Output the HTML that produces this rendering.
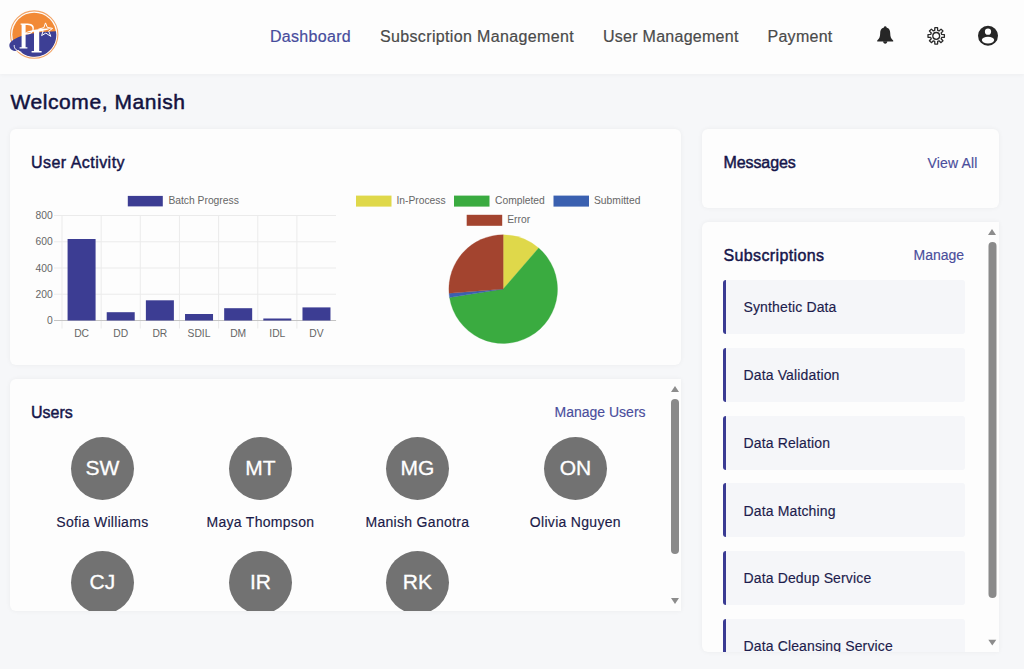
<!DOCTYPE html>
<html><head><meta charset="utf-8">
<style>
*{box-sizing:border-box;margin:0;padding:0}
html,body{width:1024px;height:669px;overflow:hidden;background:#f6f7f9;font-family:"Liberation Sans",sans-serif}
.t{position:absolute;white-space:nowrap;line-height:1}
#hdr{position:absolute;left:0;top:0;width:1024px;height:74px;background:#fdfdfd;box-shadow:0 1px 4px rgba(0,0,0,0.04)}
.nav{font-size:16px;color:#4a4a4a;top:28.8px;-webkit-text-stroke:.2px currentColor}
.card{position:absolute;background:#fdfdfd;border-radius:6px;box-shadow:0 0 5px rgba(0,0,0,0.05)}
.h{font-size:16px;color:#15154a;-webkit-text-stroke:.45px #15154a}
.lnk{font-size:14px;color:#4a4e9c;-webkit-text-stroke:.15px currentColor}
.sub{position:absolute;left:21px;width:242px;height:54px;background:#f5f6f9;border-left:3.7px solid #3a3b93;border-radius:3px}
.sub span{position:absolute;left:17.5px;top:20.3px;font-size:14px;color:#1d1d4d;white-space:nowrap;line-height:1;letter-spacing:.14px;-webkit-text-stroke:.15px currentColor}
.av{position:absolute;width:63px;height:63px;border-radius:50%;background:#727272}
.av span{position:absolute;left:0;right:0;top:20px;text-align:center;color:#fff;font-size:21px;line-height:1;-webkit-text-stroke:.3px #fff}
.nm{position:absolute;width:160px;text-align:center;font-size:14px;color:#1a1a48;line-height:1;white-space:nowrap;letter-spacing:.3px;-webkit-text-stroke:.15px currentColor}
.sb{position:absolute;background:#8a8a8a;border-radius:4px}
</style></head><body>
<div id="hdr">
  <svg style="position:absolute;left:0;top:0" width="70" height="70" viewBox="0 0 70 70">
    <circle cx="34.2" cy="34.6" r="23.7" fill="none" stroke="#f3a466" stroke-width="1.1"/>
    <circle cx="34.2" cy="34.6" r="21.9" fill="#f28a36"/>
    <path d="M9.4 44.6 C11.5 37.5 30 31.8 56 31.3 A21.9 21.9 0 0 1 18.5 50 C13.5 52.5 8.8 49.5 9.4 44.6Z" fill="#3d3f95"/>
    <path d="M14.2 45.2 C14 48.8 16.8 51.2 21.5 52.3" fill="none" stroke="#fff" stroke-width="1"/>
    <path d="M20.6 23.6 H27.6 C33.4 23.6 34.6 27 33.6 30.2 C32.6 33.4 29.4 34.8 25.6 34.4 L25.6 33.1 C29.8 33.5 32.3 32 32.5 29.2 C32.7 26 30.6 24.9 25.6 24.9 V47.2 H27.4 V48.6 H19.6 V47.2 H21.6 V24.8 H20.6Z" fill="#fff"/>
    <path d="M24.4 33.4 C27.5 30 40 28.8 51.2 28.2 C46 30.4 41.5 31.2 39.2 31.4 V51 H41.6 V52.4 H31.6 V51 H34 V31.8 C30.5 32.1 27.2 32.6 24.4 33.4Z" fill="#fff"/>
    <path d="M45.5 22.9 L47.3 27.4 L52.6 28.4 L48.7 31.2 L50.8 36.4 L45.8 33.1 L41.6 35.6 L43.1 31.1 L38.6 29.2 L43.9 27.6Z" fill="none" stroke="#fff" stroke-width="1"/>
  </svg>
  <div class="t nav" style="left:270px;color:#474c9c;letter-spacing:.3px">Dashboard</div>
  <div class="t nav" style="left:380px;letter-spacing:.35px">Subscription Management</div>
  <div class="t nav" style="left:603px;letter-spacing:.27px">User Management</div>
  <div class="t nav" style="left:767.5px;letter-spacing:.27px">Payment</div>
  <svg style="position:absolute;left:872px;top:22px" width="30" height="26" viewBox="0 0 30 26">
    <circle cx="13.2" cy="5.6" r="1.3" fill="#262626"/>
    <path d="M13.2 5.6 C16.6 5.6 18.1 7.8 18.2 11 C18.3 14.6 18.9 16.6 21.2 18.6 L21.2 19.4 H5.2 L5.2 18.6 C7.5 16.6 8.1 14.6 8.2 11 C8.3 7.8 9.8 5.6 13.2 5.6Z" fill="#262626"/>
    <path d="M11.1 19.3 H15.3 C15.3 20.9 14.4 21.8 13.2 21.8 C12 21.8 11.1 20.9 11.1 19.3Z" fill="#262626"/>
  </svg>
  <svg style="position:absolute;left:922px;top:22px" width="30" height="26" viewBox="0 0 30 26">
    <g transform="translate(14.2 13.9)">
      <path id="gear" d="M-1.48 -5.51 L-1.37 -8.19 L1.37 -8.19 L1.48 -5.51 L2.85 -4.94 L4.82 -6.76 L6.76 -4.82 L4.94 -2.85 L5.51 -1.48 L8.19 -1.37 L8.19 1.37 L5.51 1.48 L4.94 2.85 L6.76 4.82 L4.82 6.76 L2.85 4.94 L1.48 5.51 L1.37 8.19 L-1.37 8.19 L-1.48 5.51 L-2.85 4.94 L-4.82 6.76 L-6.76 4.82 L-4.94 2.85 L-5.51 1.48 L-8.19 1.37 L-8.19 -1.37 L-5.51 -1.48 L-4.94 -2.85 L-6.76 -4.82 L-4.82 -6.76 L-2.85 -4.94Z" fill="none" stroke="#2a2a2a" stroke-width="1.3" stroke-linejoin="round"/>
      <circle r="3.4" fill="none" stroke="#2a2a2a" stroke-width="1.3"/>
    </g>
  </svg>
  <svg style="position:absolute;left:973px;top:22px" width="30" height="26" viewBox="0 0 30 26">
    <circle cx="15" cy="13.7" r="10" fill="#262626"/>
    <circle cx="15" cy="9.7" r="3.1" fill="#fff"/>
    <ellipse cx="15" cy="18.1" rx="6.2" ry="3.3" fill="#fff"/>
  </svg>
</div>

<div class="t" style="left:10.5px;top:91px;font-size:21px;color:#12123f;letter-spacing:.57px;-webkit-text-stroke:.5px #12123f">Welcome, Manish</div>

<!-- User Activity card -->
<div class="card" style="left:10px;top:129px;width:671px;height:236px"></div>
<div class="t h" style="left:31px;top:154.8px;letter-spacing:.46px">User Activity</div>
<div id="charts"><svg style="position:absolute;left:0;top:0" width="1024" height="669" viewBox="0 0 1024 669">
<g font-family="Liberation Sans" font-size="10.3" fill="#666">
<line x1="54" y1="215.5" x2="336.05" y2="215.5" stroke="#ebebeb" stroke-width="1"/>
<text x="52.8" y="219.10" text-anchor="end">800</text>
<line x1="54" y1="241.75" x2="336.05" y2="241.75" stroke="#ebebeb" stroke-width="1"/>
<text x="52.8" y="245.35" text-anchor="end">600</text>
<line x1="54" y1="268.0" x2="336.05" y2="268.0" stroke="#ebebeb" stroke-width="1"/>
<text x="52.8" y="271.60" text-anchor="end">400</text>
<line x1="54" y1="294.25" x2="336.05" y2="294.25" stroke="#ebebeb" stroke-width="1"/>
<text x="52.8" y="297.85" text-anchor="end">200</text>
<line x1="54" y1="320.5" x2="336.05" y2="320.5" stroke="#c4c4c4" stroke-width="1"/>
<text x="52.8" y="324.10" text-anchor="end">0</text>
<line x1="62.00" y1="215.5" x2="62.00" y2="328.5" stroke="#ebebeb" stroke-width="1"/>
<line x1="101.15" y1="215.5" x2="101.15" y2="328.5" stroke="#ebebeb" stroke-width="1"/>
<line x1="140.30" y1="215.5" x2="140.30" y2="328.5" stroke="#ebebeb" stroke-width="1"/>
<line x1="179.45" y1="215.5" x2="179.45" y2="328.5" stroke="#ebebeb" stroke-width="1"/>
<line x1="218.60" y1="215.5" x2="218.60" y2="328.5" stroke="#ebebeb" stroke-width="1"/>
<line x1="257.75" y1="215.5" x2="257.75" y2="328.5" stroke="#ebebeb" stroke-width="1"/>
<line x1="296.90" y1="215.5" x2="296.90" y2="328.5" stroke="#ebebeb" stroke-width="1"/>
<line x1="54" y1="320.5" x2="336.05" y2="320.5" stroke="#c4c4c4" stroke-width="1"/>
<rect x="67.58" y="239" width="28" height="81.50" fill="#3c3d93"/>
<text x="81.58" y="337.2" text-anchor="middle">DC</text>
<rect x="106.72" y="312.2" width="28" height="8.30" fill="#3c3d93"/>
<text x="120.72" y="337.2" text-anchor="middle">DD</text>
<rect x="145.88" y="300.3" width="28" height="20.20" fill="#3c3d93"/>
<text x="159.88" y="337.2" text-anchor="middle">DR</text>
<rect x="185.03" y="314" width="28" height="6.50" fill="#3c3d93"/>
<text x="199.03" y="337.2" text-anchor="middle">SDIL</text>
<rect x="224.17" y="308.2" width="28" height="12.30" fill="#3c3d93"/>
<text x="238.17" y="337.2" text-anchor="middle">DM</text>
<rect x="263.32" y="318.5" width="28" height="2.00" fill="#3c3d93"/>
<text x="277.32" y="337.2" text-anchor="middle">IDL</text>
<rect x="302.48" y="307.4" width="28" height="13.10" fill="#3c3d93"/>
<text x="316.48" y="337.2" text-anchor="middle">DV</text>
<rect x="127.8" y="195.9" width="35" height="10.5" fill="#3c3d93"/>
<text x="168.4" y="203.9">Batch Progress</text>
<rect x="356" y="195.6" width="35.5" height="11" fill="#dfd84a"/>
<text x="396.4" y="203.9">In-Process</text>
<rect x="454" y="195.6" width="35.5" height="11" fill="#3aab40"/>
<text x="495" y="203.9">Completed</text>
<rect x="553.5" y="195.6" width="35.5" height="11" fill="#3a60b0"/>
<text x="594" y="203.9">Submitted</text>
<rect x="466.7" y="214.8" width="35.5" height="11" fill="#a3442f"/>
<text x="507.2" y="222.9">Error</text>
</g>
<path d="M503.2 289.1 L503.20 234.80 A54.3 54.3 0 0 1 538.68 248.00Z" fill="#dfd84a" stroke="#dfd84a" stroke-width="0.3"/>
<path d="M503.2 289.1 L538.68 248.00 A54.3 54.3 0 1 1 449.55 297.50Z" fill="#3aab40" stroke="#3aab40" stroke-width="0.3"/>
<path d="M503.2 289.1 L449.55 297.50 A54.3 54.3 0 0 1 449.07 293.36Z" fill="#3a60b0" stroke="#3a60b0" stroke-width="0.3"/>
<path d="M503.2 289.1 L449.07 293.36 A54.3 54.3 0 0 1 503.20 234.80Z" fill="#a3442f" stroke="#a3442f" stroke-width="0.3"/>
</svg></div>

<!-- Users card -->
<div class="card" style="left:10px;top:379px;width:671px;height:232px;border-radius:6px 0 0 6px;overflow:hidden"></div>
<div class="t h" style="left:31px;top:404.9px;letter-spacing:0px">Users</div>
<div class="t lnk" style="left:554.5px;top:405.3px">Manage Users</div>
<div id="users"><div style="position:absolute;left:10px;top:379px;width:671px;height:232px;overflow:hidden">
<div class="av" style="left:60.90px;top:58px"><span>SW</span></div>
<div class="nm" style="left:12.40px;top:136.0px">Sofia Williams</div>
<div class="av" style="left:218.90px;top:58px"><span>MT</span></div>
<div class="nm" style="left:170.40px;top:136.0px">Maya Thompson</div>
<div class="av" style="left:375.90px;top:58px"><span>MG</span></div>
<div class="nm" style="left:327.40px;top:136.0px">Manish Ganotra</div>
<div class="av" style="left:533.90px;top:58px"><span>ON</span></div>
<div class="nm" style="left:485.40px;top:136.0px">Olivia Nguyen</div>
<div class="av" style="left:60.90px;top:172px"><span>CJ</span></div>
<div class="av" style="left:218.90px;top:172px"><span>IR</span></div>
<div class="av" style="left:375.90px;top:172px"><span>RK</span></div>
</div>
<svg style="position:absolute;left:668px;top:383px" width="14" height="226" viewBox="0 0 14 226">
<path d="M3 9 L7 3 L11 9Z" fill="#8c8c8c"/>
<rect x="3" y="16" width="8" height="155" rx="4" fill="#8a8a8a"/>
<path d="M3 215 L11 215 L7 221Z" fill="#8c8c8c"/>
</svg>
</div><!--/users-->

<!-- Messages card -->
<div class="card" style="left:702px;top:129px;width:297px;height:79px"></div>
<div class="t h" style="left:723.5px;top:155px;letter-spacing:-.1px">Messages</div>
<div class="t lnk" style="left:927.5px;top:155.8px;letter-spacing:.15px">View All</div>

<!-- Subscriptions card -->
<div class="card" style="left:702px;top:222px;width:297px;height:430px;border-radius:6px 0 0 6px;overflow:hidden"></div>
<div class="t h" style="left:723.5px;top:248px;letter-spacing:.38px">Subscriptions</div>
<div class="t lnk" style="left:913.5px;top:248.3px">Manage</div>
<div id="subs"><div style="position:absolute;left:702px;top:222px;width:297px;height:430px;overflow:hidden">
<div class="sub" style="top:58.20px"><span>Synthetic Data</span></div>
<div class="sub" style="top:125.95px"><span>Data Validation</span></div>
<div class="sub" style="top:193.70px"><span>Data Relation</span></div>
<div class="sub" style="top:261.45px"><span>Data Matching</span></div>
<div class="sub" style="top:329.20px"><span>Data Dedup Service</span></div>
<div class="sub" style="top:396.95px"><span>Data Cleansing Service</span></div>
</div>
<svg style="position:absolute;left:985px;top:226px" width="14" height="424" viewBox="0 0 14 424">
<path d="M3 9 L7 3 L11 9Z" fill="#8c8c8c"/>
<rect x="3.5" y="16" width="8" height="356" rx="4" fill="#8a8a8a"/>
<path d="M3.3 413.7 L11.3 413.7 L7.3 419.5Z" fill="#8c8c8c"/>
</svg>
</div><!--/subs-->

</body></html>
